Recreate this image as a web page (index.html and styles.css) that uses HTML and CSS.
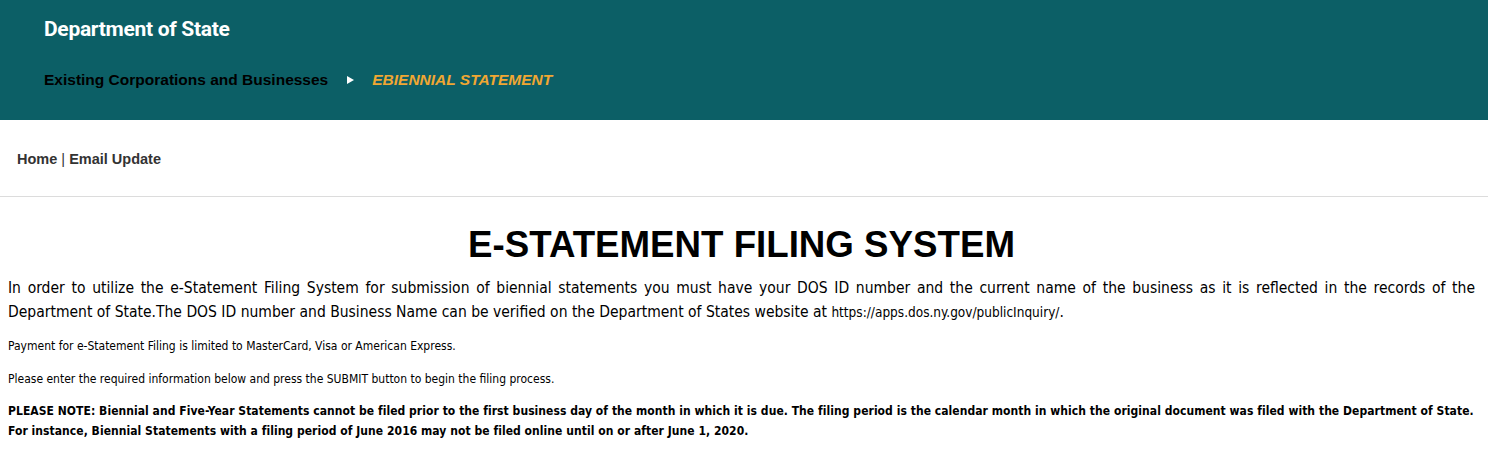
FILE: index.html
```html
<!DOCTYPE html>
<html lang="en">
<head>
<meta charset="utf-8">
<title>E-Statement Filing System</title>
<link rel="stylesheet" href="styles.css">
</head>
<body>
<header class="site-header">
  <div class="brand">Department of State</div>
  <nav class="crumbs">
    <span class="crumb">Existing Corporations and Businesses</span>
    <svg class="crumb-arrow" width="7" height="8" viewBox="0 0 7 8"><polygon points="0,0 7,4 0,8" fill="#ffffff"/></svg>
    <span class="crumb-current">EBIENNIAL STATEMENT</span>
  </nav>
</header>
<div class="subnav">
  <a class="subnav-link" href="#">Home</a> <span class="sep">|</span> <a class="subnav-link" href="#">Email Update</a>
</div>
<main class="content">
  <h1 class="title">E-STATEMENT FILING SYSTEM</h1>
  <p class="lead">In order to utilize the e-Statement Filing System for submission of biennial statements you must have your DOS ID number and the current name of the business as it is reflected in the records of the Department of State.The DOS ID number and Business Name can be verified on the Department of States website at <span class="url">https://apps.dos.ny.gov/publicInquiry/</span>.</p>
  <p class="small">Payment for e-Statement Filing is limited to MasterCard, Visa or American Express.</p>
  <p class="small second">Please enter the required information below and press the SUBMIT button to begin the filing process.</p>
  <p class="note">PLEASE NOTE: Biennial and Five-Year Statements cannot be filed prior to the first business day of the month in which it is due. The filing period is the calendar month in which the original document was filed with the Department of State. For instance, Biennial Statements with a filing period of June 2016 may not be filed online until on or after June 1, 2020.</p>
</main>
</body>
</html>
```
FILE: styles.css
```css
html, body {
  margin: 0;
  padding: 0;
  background: #ffffff;
}
body {
  font-family: "DejaVu Sans Condensed", "DejaVu Sans", sans-serif;
  color: #000000;
}
.site-header {
  background: #0c5f66;
  height: 120px;
  box-sizing: border-box;
  padding: 16px 44px 0;
}
.brand {
  font-family: Roboto, "Liberation Sans", sans-serif;
  font-weight: 700;
  font-size: 21px;
  letter-spacing: -0.3px;
  color: #ffffff;
  line-height: 26px;
}
.crumbs {
  display: flex;
  align-items: center;
  margin-top: 25px;
  font-family: "Liberation Sans", Arial, sans-serif;
  font-weight: 700;
  font-size: 15.5px;
  line-height: 26px;
}
.crumb { color: #000000; }
.crumb-arrow { margin: 0 18px 0 19px; }
.crumb-current { color: #f0a732; font-style: italic; }
.subnav {
  height: 77px;
  box-sizing: border-box;
  padding: 31px 17px 0;
  border-bottom: 1px solid #dcdcdc;
  font-family: "Liberation Sans", Arial, sans-serif;
  font-weight: 700;
  font-size: 14.5px;
  color: #333333;
}
.subnav-link { color: #333333; text-decoration: none; }
.sep { font-weight: 400; }
.content {
  padding: 0 13px 0 8px;
}
.title {
  margin: 28px 0 0;
  text-align: center;
  font-family: "Liberation Sans", Arial, sans-serif;
  font-weight: 700;
  font-size: 36.7px;
  line-height: 40px;
}
.lead {
  margin: 11px 0 0;
  font-size: 15.5px;
  line-height: 24px;
  text-align: justify;
}
.url { font-size: 13.5px; }
.small {
  margin: 14px 0 0;
  font-size: 12px;
  line-height: 16px;
}
.small.second { margin-top: 17px; }
.note {
  margin: 14px 0 0;
  font-size: 12px;
  font-weight: 700;
  letter-spacing: 0.05px;
  line-height: 20px;
}
```
